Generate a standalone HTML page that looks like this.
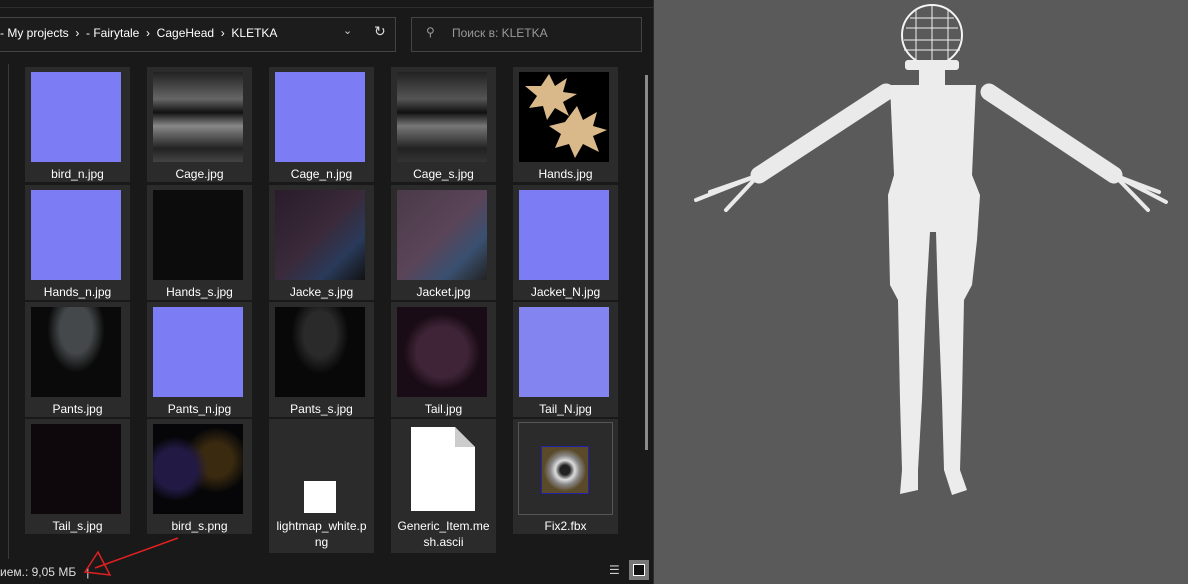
<!DOCTYPE html>
<html><head><meta charset="utf-8"><style>
body{margin:0;width:1188px;height:584px;overflow:hidden;background:#5a5a5a;font-family:"Liberation Sans","Noto Sans CJK SC",sans-serif;position:relative}
#ex{position:absolute;left:0;top:0;width:653px;height:584px;background:#191919;border-right:1px solid #2b2b2b}
.tile{position:absolute;width:105px;height:115px;background:#2b2b2b}
.th{position:absolute;left:6px;top:5px;width:90px;height:90px}
.lb{position:absolute;left:0;right:0;top:99px;text-align:center;color:#fff;font-size:12px;line-height:16px}
.nm{background:#7c7cf4}
</style></head><body>
<div id="ex">
 <div style="position:absolute;left:0;top:7px;width:653px;height:1px;background:#2e2e2e"></div>
 <div style="position:absolute;left:-2px;top:17px;width:396px;height:33px;border:1px solid #444;background:#1c1c1c"></div>
 <div style="position:absolute;left:0;top:26px;color:#fff;font-size:12px;white-space:nowrap">- My projects&nbsp; › &nbsp;- Fairytale&nbsp; › &nbsp;CageHead&nbsp; › &nbsp;KLETKA</div>
 <div style="position:absolute;left:343px;top:24px;color:#ccc;font-size:11px">⌄</div>
 <div style="position:absolute;left:374px;top:23px;color:#ddd;font-size:14px">↻</div>
 <div style="position:absolute;left:411px;top:17px;width:229px;height:33px;border:1px solid #444;background:#1c1c1c"></div>
 <div style="position:absolute;left:426px;top:25px;color:#999;font-size:12px">⚲</div>
 <div style="position:absolute;left:452px;top:26px;color:#999;font-size:12px">Поиск в: KLETKA</div>
 <div style="position:absolute;left:8px;top:64px;width:1px;height:516px;background:#3a3a3a"></div>
 <div style="position:absolute;left:645px;top:75px;width:3px;height:375px;background:#8a8a8a"></div>

 <div class="tile" style="left:25px;top:67px"><div class="th nm"></div><div class="lb">bird_n.jpg</div></div>
 <div class="tile" style="left:147px;top:67px"><div class="th" style="background:linear-gradient(#222,#666 30%,#111 45%,#888 60%,#222 85%,#444)"></div><div class="lb">Cage.jpg</div></div>
 <div class="tile" style="left:269px;top:67px"><div class="th nm"></div><div class="lb">Cage_n.jpg</div></div>
 <div class="tile" style="left:391px;top:67px"><div class="th" style="background:linear-gradient(#222,#555 30%,#111 45%,#777 60%,#222 85%,#333)"></div><div class="lb">Cage_s.jpg</div></div>
 <div class="tile" style="left:513px;top:67px"><div class="th" style="background:#000"><svg width="90" height="90"><g fill="#d9b98a"><path d="M30 2L36 14L48 6L44 20L58 22L44 30L50 44L36 36L28 48L24 34L10 36L18 24L6 14L22 14Z"/><path d="M58 34L64 48L78 40L74 54L88 58L74 64L80 80L64 72L56 86L50 72L36 76L42 62L30 54L46 50Z"/></g></svg></div><div class="lb">Hands.jpg</div></div>

 <div class="tile" style="left:25px;top:185px"><div class="th nm"></div><div class="lb">Hands_n.jpg</div></div>
 <div class="tile" style="left:147px;top:185px"><div class="th" style="background:#0c0c0c"></div><div class="lb">Hands_s.jpg</div></div>
 <div class="tile" style="left:269px;top:185px"><div class="th" style="background:linear-gradient(135deg,#2a1c2a,#3a2a3a 50%,#2a3a5a 75%,#111)"></div><div class="lb">Jacke_s.jpg</div></div>
 <div class="tile" style="left:391px;top:185px"><div class="th" style="background:linear-gradient(135deg,#4a3a48,#5a4458 50%,#3a5070 75%,#222)"></div><div class="lb">Jacket.jpg</div></div>
 <div class="tile" style="left:513px;top:185px"><div class="th nm"></div><div class="lb">Jacket_N.jpg</div></div>

 <div class="tile" style="left:25px;top:302px"><div class="th" style="background:radial-gradient(ellipse at 50% 25%,#44484a 25%,#0a0a0a 45%)"></div><div class="lb">Pants.jpg</div></div>
 <div class="tile" style="left:147px;top:302px"><div class="th nm"></div><div class="lb">Pants_n.jpg</div></div>
 <div class="tile" style="left:269px;top:302px"><div class="th" style="background:radial-gradient(ellipse at 50% 30%,#2a2a2a 25%,#080808 45%)"></div><div class="lb">Pants_s.jpg</div></div>
 <div class="tile" style="left:391px;top:302px"><div class="th" style="background:radial-gradient(ellipse at 50% 50%,#3e2436 40%,#1a0c16 60%)"></div><div class="lb">Tail.jpg</div></div>
 <div class="tile" style="left:513px;top:302px"><div class="th nm" style="background:#8484f0"></div><div class="lb">Tail_N.jpg</div></div>

 <div class="tile" style="left:25px;top:419px"><div class="th" style="background:#0e070c"></div><div class="lb">Tail_s.jpg</div></div>
 <div class="tile" style="left:147px;top:419px"><div class="th" style="background:radial-gradient(circle at 25% 50%,#221a44 25%,transparent 40%),radial-gradient(circle at 70% 40%,#3a2a10 20%,transparent 40%),#060608"></div><div class="lb">bird_s.png</div></div>
 <div class="tile" style="left:269px;top:419px;height:134px"><div style="position:absolute;left:35px;top:62px;width:32px;height:32px;background:#fff"></div><div class="lb">lightmap_white.p<br>ng</div></div>
 <div class="tile" style="left:391px;top:419px;height:134px"><svg style="position:absolute;left:20px;top:8px" width="64" height="84"><path d="M0 0H44L64 20V84H0Z" fill="#fff"/><path d="M44 0V20H64Z" fill="#ccc"/></svg><div class="lb">Generic_Item.me<br>sh.ascii</div></div>
 <div class="tile" style="left:513px;top:419px"><div style="position:absolute;left:5px;top:3px;width:93px;height:91px;border:1px solid #555"></div><div style="position:absolute;left:28px;top:27px;width:46px;height:46px;border:1px solid #22a;background:radial-gradient(ellipse,#222 15%,#ddd 30%,#888 45%,#5a4a2a 65%)"></div><div class="lb">Fix2.fbx</div></div>

 <div style="position:absolute;left:0;top:559px;width:653px;height:25px;background:#191919"></div>
 <div style="position:absolute;left:0;top:565px;color:#ddd;font-size:12px">ием.: 9,05 МБ &nbsp;&nbsp;|</div>
 <div style="position:absolute;left:609px;top:563px;width:14px;height:14px;color:#ccc;font-size:12px;line-height:14px">☰</div>
 <div style="position:absolute;left:629px;top:560px;width:20px;height:20px;background:#777"><div style="position:absolute;left:4px;top:4px;width:10px;height:10px;border:1px solid #fff;background:#111"></div></div>
 <svg style="position:absolute;left:0;top:0" width="653" height="584"><path d="M178 538L95 568M98 552L85 572L110 575Z" stroke="#e02020" stroke-width="1.5" fill="none"/></svg>
</div>
<svg style="position:absolute;left:654px;top:0" width="534" height="584">
 <g stroke="#eaeaea" stroke-linecap="round" fill="none">
  <path d="M232 92L105 175" stroke-width="17"/>
  <path d="M335 92L460 175" stroke-width="17"/>
  <path d="M105 175L42 200M100 180L72 210M105 175L56 192" stroke-width="4"/>
  <path d="M460 175L512 202M465 180L494 210M460 175L505 192" stroke-width="4"/>
 </g>
 <g fill="#ececec">
  <circle cx="278" cy="35" r="30" fill="none" stroke="#f4f4f4" stroke-width="2"/>
  <path d="M250 40H306M252 28H304M256 18H300M278 5V64M262 10V62M294 10V62M250 50H306" stroke="#f0f0f0" fill="none"/>
  <rect x="251" y="60" width="54" height="10" rx="3"/>
  <rect x="265" y="70" width="26" height="16"/>
  <path d="M236 85H322L318 175L326 195L323 240L318 285L310 300L308 400L306 470L313 490L298 495L290 470L288 400L284 300L282 232L276 232L272 300L268 400L264 470L264 490L246 494L248 470L246 400L244 300L236 285L234 195L240 175Z"/>
 </g>
</svg>
</body></html>
